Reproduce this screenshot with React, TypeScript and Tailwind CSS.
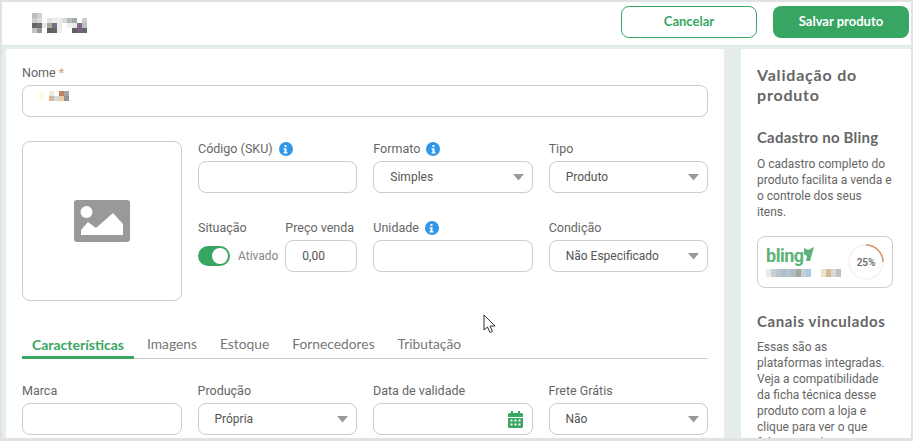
import type { ReactNode } from 'react';

const labelFont = "font-['Roboto','Liberation_Sans',sans-serif]";
const headFont = "font-['Lato','Liberation_Sans',sans-serif]";

// blurred logo mosaic in the top bar: [col, row, colour], cells are 5px
const logoCells: [number, number, string][] = [
  [0, 0, '#b9bfbd'], [1, 0, '#cfd2d1'],
  [0, 1, '#c9cccb'], [1, 1, '#d9dbda'], [3, 1, '#dfe3e2'], [4, 1, '#eaeeed'], [5, 1, '#eaeeed'], [6, 1, '#d9dbda'], [7, 1, '#b5bdbb'], [8, 1, '#a3aba0'], [10, 1, '#c9cccb'],
  [0, 2, '#666666'], [1, 2, '#6e6e6e'], [2, 2, '#e3ebe9'], [3, 2, '#a3aba0'], [4, 2, '#7f6a85'], [5, 2, '#e8ecea'], [7, 2, '#eef1f0'], [8, 2, '#e3ebe9'], [9, 2, '#7f6a85'], [10, 2, '#b5c0bf'],
  [0, 3, '#c0c3c2'], [1, 3, '#9a9a9a'], [3, 3, '#5f5f5f'], [4, 3, '#626262'], [5, 3, '#eeeeee'], [8, 3, '#5f5f5f'], [9, 3, '#7f5f80'], [10, 3, '#666666'],
];

const nameCells: [number, number, string][] = [
  [0, 0, '#fdfbe6'], [2, 0, '#f0e9db'], [4, 0, '#bd8260'], [5, 0, '#a5a89f'],
  [0, 1, '#fdfbe6'], [2, 1, '#dcb793'], [3, 1, '#c9dde6'], [4, 1, '#eecb9f'], [5, 1, '#939393'],
];

const blingCells: [number, string][] = [
  [0, '#e6ece6'], [1, '#c9ccd0'], [2, '#b9c4cc'], [3, '#aebfcc'], [4, '#b4c4cf'], [5, '#aebcc6'], [6, '#a3a89f'], [7, '#c3cfd6'], [8, '#a9cbdf'], [11, '#eee0cc'], [12, '#d9b99c'], [13, '#d5d9d9'], [14, '#bfc2c2'],
];

function Mosaic({ cells, size }: { cells: [number, number, string][]; size: number }) {
  return (
    <svg width={size * 11} height={size * 4} aria-hidden="true">
      {cells.map(([c, r, fill], i) => (
        <rect key={i} x={c * size} y={r * size} width={size} height={size} fill={fill} />
      ))}
    </svg>
  );
}

function InfoDot() {
  return (
    <span className="flex h-[14px] w-[14px] items-center justify-center rounded-full bg-[#2f96e8]">
      <svg width="5" height="9" viewBox="0 0 5 9" aria-hidden="true">
        <rect x="1.5" y="0" width="2" height="2" fill="#fff" />
        <path d="M0.5 3.2h3v4.1h1v1.2h-4V7.3h1V4.4h-1z" fill="#fff" />
      </svg>
    </span>
  );
}

function Label({ text, info, required }: { text: string; info?: boolean; required?: boolean }) {
  return (
    <div className="mb-[5px] flex h-[14px] items-center gap-[6px] text-[12.5px] leading-[14px] whitespace-nowrap text-[#666666]">
      <span>
        {text}
        {required && <span className="text-[#c9a27e]"> *</span>}
      </span>
      {info && <InfoDot />}
    </div>
  );
}

function Input({ value, children }: { value?: string; children?: ReactNode }) {
  return (
    <div className="flex h-[32px] items-center justify-between rounded-[8px] border border-[#cccccc] bg-white pr-[8px] pl-[16px] text-[12px] text-[#555555]">
      <span>{value}</span>
      {children}
    </div>
  );
}

function Select({ value }: { value: string }) {
  return (
    <Input value={value}>
      <svg width="11" height="7" viewBox="0 0 11 7" aria-hidden="true">
        <path d="M0 0h11L5.5 6.5z" fill="#999999" />
      </svg>
    </Input>
  );
}

function Field({ label, info, children }: { label: string; info?: boolean; children: ReactNode }) {
  return (
    <div>
      <Label text={label} info={info} />
      {children}
    </div>
  );
}

const tabs = ['Imagens', 'Estoque', 'Fornecedores', 'Tributação'];

export default function App() {
  return (
    <div className={`flex h-[441px] w-[913px] flex-col overflow-hidden border-2 border-b-[3px] border-[#e1e3e3] bg-[#e5eeeb] ${labelFont}`}>
      {/* Top bar */}
      <header className="flex h-[44px] shrink-0 items-center justify-between border-b border-[#dfe4e3] bg-white pr-[2px] pb-[4px] pl-[30px]">
        <div className="mt-[2px]">
          <Mosaic cells={logoCells} size={5} />
        </div>
        <div className={`flex gap-[16px] text-[13px] font-bold ${headFont}`}>
          <button className="h-[32px] w-[136px] rounded-[8px] border border-[#38a663] bg-white text-[#38a663]">
            Cancelar
          </button>
          <button className="h-[32px] w-[136px] rounded-[8px] bg-[#38a663] text-white">Salvar produto</button>
        </div>
      </header>

      <div className="mt-[3px] flex min-h-0 flex-1 pl-[4px]">
        {/* Main form */}
        <main className="w-[718px] shrink-0 overflow-hidden bg-white px-[16px] pt-[17px]">
          <Label text="Nome" required />
          <div className="flex h-[32px] items-center rounded-[8px] border border-[#cccccc] pl-[16px]">
            <Mosaic cells={nameCells} size={5} />
          </div>

          <div className="mt-[24px] flex gap-[16px]">
            <div className="flex h-[160px] w-[160px] shrink-0 items-center justify-center rounded-[8px] border border-[#cccccc]">
              <svg width="56" height="42" viewBox="0 0 56 42" aria-hidden="true">
                <rect width="56" height="42" rx="3" fill="#999999" />
                <circle cx="12.5" cy="12" r="6" fill="#fff" />
                <path d="M7 30l7-8 8 6 17-15 10 11v11H7z" fill="#fff" />
              </svg>
            </div>

            <div className="grid flex-1 grid-cols-3 content-start gap-x-[16px] gap-y-[28px] pt-[1px]">
              <Field label="Código (SKU)" info>
                <Input />
              </Field>
              <Field label="Formato" info>
                <Select value="Simples" />
              </Field>
              <Field label="Tipo">
                <Select value="Produto" />
              </Field>

              <div className="flex justify-between">
                <div>
                  <Label text="Situação" />
                  <div className="mt-[11px] flex items-center gap-[8px]">
                    <span className="flex h-[20px] w-[32px] items-center justify-end rounded-full bg-[#38a663] pr-[2px]">
                      <span className="h-[16px] w-[16px] rounded-full bg-white" />
                    </span>
                    <span className="text-[12px] text-[#888888]">Ativado</span>
                  </div>
                </div>
                <div className="w-[72px]">
                  <Label text="Preço venda" />
                  <div className="flex h-[32px] items-center rounded-[8px] border border-[#cccccc] pl-[16px] text-[12px] text-[#555555]">
                    0,00
                  </div>
                </div>
              </div>
              <Field label="Unidade" info>
                <Input />
              </Field>
              <Field label="Condição">
                <Select value="Não Especificado" />
              </Field>
            </div>
          </div>

          {/* Tabs */}
          <nav className={`mt-[33px] flex h-[25px] border-b border-[#cccccc] text-[13.8px] text-[#777777] ${headFont}`}>
            <span className="mb-[-1px] h-[25px] w-[112px] border-b-[3px] border-[#38a663] pl-[10px] text-[14px] font-bold whitespace-nowrap text-[#38a663]">
              Características
            </span>
            <div className="ml-[13px] flex gap-[23px]">
              {tabs.map((tab) => (
                <span key={tab}>{tab}</span>
              ))}
            </div>
          </nav>

          <div className="mt-[25px] grid grid-cols-4 gap-x-[16px]">
            <Field label="Marca">
              <Input />
            </Field>
            <Field label="Produção">
              <Select value="Própria" />
            </Field>
            <Field label="Data de validade">
              <Input>
                <svg width="15" height="17" viewBox="0 0 15 17" className="mr-[1px]" aria-hidden="true">
                  <path
                    d="M3 0h2v2h5V0h2v2h1.5A1.5 1.5 0 0 1 15 3.5V6H0V3.5A1.5 1.5 0 0 1 1.5 2H3z"
                    fill="#38a663"
                  />
                  <path
                    fillRule="evenodd"
                    d="M0 7h15v8.5a1.5 1.5 0 0 1-1.500 1.500h-12A1.500 1.500 0 0 1 0 15.500zM2.500 8.500v2h2v-2zM6.500 8.500v2h2v-2zM10.500 8.500v2h2v-2zM2.500 12.500v2h2v-2zM6.500 12.500v2h2v-2zM10.500 12.500v2h2v-2z"
                    fill="#38a663"
                  />
                </svg>
              </Input>
            </Field>
            <Field label="Frete Grátis">
              <Select value="Não" />
            </Field>
          </div>
        </main>

        {/* Validation panel */}
        <aside className="ml-[17px] flex-1 overflow-hidden bg-white pt-[16px] pr-[18px] pl-[16px] text-[#666666]">
          <h2 className={`text-[16px] leading-[20px] font-bold tracking-[0.8px] text-[#666666] ${headFont}`}>
            Validação do produto
          </h2>
          <h3 className={`mt-[22px] text-[15px] leading-[20px] font-bold tracking-[0.2px] text-[#666666] ${headFont}`}>
            Cadastro no Bling
          </h3>
          <p className="mt-[9px] text-[12px] leading-[16px]">
            O cadastro completo do produto facilita a venda e o controle dos seus itens.
          </p>
          <div className="mt-[16px] flex h-[52px] items-center justify-between rounded-[8px] border border-[#cccccc] px-[8px]">
            <div>
              <div className="flex items-start text-[18px] leading-[18px] font-bold tracking-[-0.5px] text-[#5cb377]">
                bling
                <svg width="11" height="14" viewBox="0 0 11 14" className="ml-[-1px]" aria-hidden="true">
                  <path d="M1 1l4 2 6-3-4 14H3l1-5-3-2z" fill="#5cb377" />
                </svg>
              </div>
              <svg width="75" height="8" className="mt-[4px] block" aria-hidden="true">
                {blingCells.map(([c, fill]) => (
                  <rect key={c} x={c * 5} y="0" width="5" height="8" fill={fill} />
                ))}
              </svg>
            </div>
            <div className="relative flex h-[36px] w-[36px] items-center justify-center text-[10px] font-medium text-[#666666]">
              <svg width="36" height="36" viewBox="0 0 36 36" className="absolute inset-0" aria-hidden="true">
                <circle cx="18" cy="18" r="17" fill="none" stroke="#f2f2f2" strokeWidth="1.5" />
                <path d="M18 1a17 17 0 0 1 17 17" fill="none" stroke="#d0946a" strokeWidth="1.5" />
              </svg>
              25%
            </div>
          </div>
          <h3 className={`mt-[23px] text-[15px] leading-[20px] font-bold tracking-[0.6px] text-[#666666] ${headFont}`}>
            Canais vinculados
          </h3>
          <p className="mt-[8px] text-[12px] leading-[16px]">
            Essas são as plataformas integradas. Veja a compatibilidade da ficha técnica desse produto com a loja e
            clique para ver o que falta em cada uma
          </p>
        </aside>
      </div>

      {/* Mouse cursor captured in the screenshot */}
      <svg width="15" height="20" viewBox="0 0 15 20" className="absolute top-[314px] left-[483px]" aria-hidden="true">
        <path d="M1 1v15l3.500-3 2.500 5.500 2.500-1-2.500-5.500H12z" fill="#fff" stroke="#333" strokeWidth="1" />
      </svg>
    </div>
  );
}
